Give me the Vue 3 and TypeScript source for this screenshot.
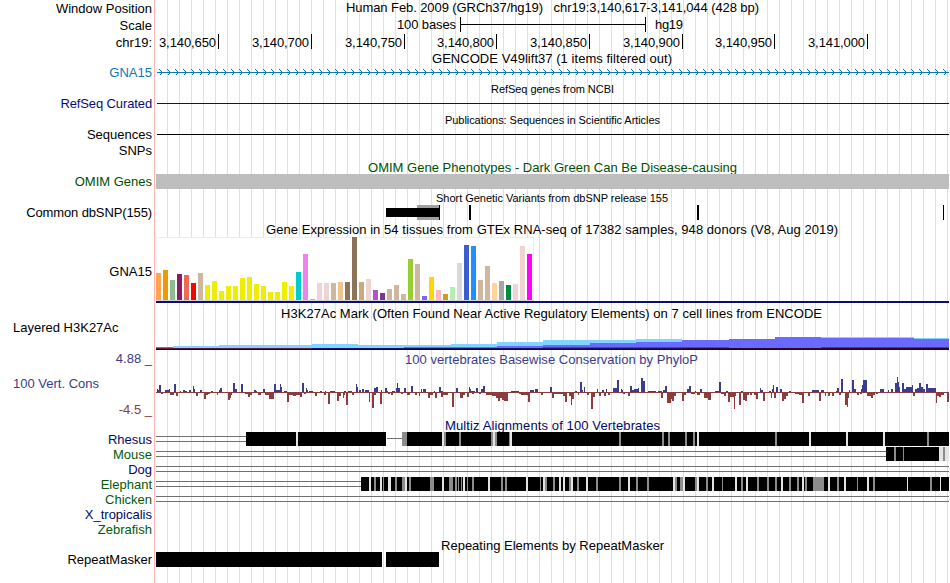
<script setup lang="ts">
type Bar = [number, number, number]
type Seg = [number, number]
interface Title { text: string; x: number; w: number; base: number; size?: number; color?: string }
interface Track {
  id: string
  y: number
  h: number
  label?: string
  color?: string
  side?: 'left'
  tight?: boolean
  title?: Title
  kind?: string
}

const tracks: Track[] = [
  { id: 'pos', y: 0, h: 17, label: 'Window Position', title: { text: 'Human Feb. 2009 (GRCh37/hg19)\u00a0\u00a0 chr19:3,140,617-3,141,044 (428 bp)', x: 346, w: 413, base: 12 } },
  { id: 'scale', y: 17, h: 17, label: 'Scale', kind: 'scale' },
  { id: 'ruler', y: 34, h: 16, label: 'chr19:', kind: 'ruler' },
  { id: 'gencode-t', y: 50, h: 15, title: { text: 'GENCODE V49lift37 (1 items filtered out)', x: 432, w: 240, base: 63 } },
  { id: 'gencode', y: 65, h: 15, label: 'GNA15', color: '#0c78b4', kind: 'gene' },
  { id: 'refseq-t', y: 80, h: 16, title: { text: 'RefSeq genes from NCBI', x: 491, w: 123, base: 93, size: 11 } },
  { id: 'refseq', y: 96, h: 15, label: 'RefSeq Curated', color: '#0c0c78', tight: true, kind: 'refseq' },
  { id: 'pubs-t', y: 111, h: 16, title: { text: 'Publications: Sequences in Scientific Articles', x: 445, w: 215, base: 124, size: 11 } },
  { id: 'pubs', y: 127, h: 15, label: 'Sequences', kind: 'pubs' },
  { id: 'snps', y: 142, h: 16, label: 'SNPs' },
  { id: 'omim-t', y: 158, h: 16, title: { text: 'OMIM Gene Phenotypes - Dark Green Can Be Disease-causing', x: 368, w: 369, base: 172, color: '#005000' } },
  { id: 'omim', y: 174, h: 15, label: 'OMIM Genes', color: '#005000', kind: 'omim' },
  { id: 'dbsnp-t', y: 189, h: 16, title: { text: 'Short Genetic Variants from dbSNP release 155', x: 436, w: 232, base: 202, size: 11 } },
  { id: 'dbsnp', y: 205, h: 15, label: 'Common dbSNP(155)', tight: true, kind: 'dbsnp' },
  { id: 'gtex-t', y: 220, h: 16, title: { text: 'Gene Expression in 54 tissues from GTEx RNA-seq of 17382 samples, 948 donors (V8, Aug 2019)', x: 266, w: 572, base: 234 } },
  { id: 'gtex', y: 236, h: 70, label: 'GNA15', kind: 'gtex' },
  { id: 'h3k-t', y: 306, h: 14, title: { text: 'H3K27Ac Mark (Often Found Near Active Regulatory Elements) on 7 cell lines from ENCODE', x: 281, w: 541, base: 318 } },
  { id: 'h3k', y: 320, h: 15, label: 'Layered H3K27Ac', side: 'left', kind: 'h3k' },
  { id: 'gap', y: 335, h: 16 },
  { id: 'cons-t', y: 351, h: 15, label: '4.88 _', color: '#3c3c8c', title: { text: '100 vertebrates Basewise Conservation by PhyloP', x: 405, w: 293, base: 364, color: '#3c3c8c' } },
  { id: 'cons', y: 366, h: 35, label: '100 Vert. Cons', color: '#3c3c8c', side: 'left', kind: 'cons' },
  { id: 'cons-b', y: 401, h: 16, label: '-4.5 _', color: '#8c3c3c' },
  { id: 'multiz-t', y: 417, h: 15, title: { text: 'Multiz Alignments of 100 Vertebrates', x: 445, w: 215, base: 430, color: '#000a64' } },
  { id: 'rhesus', y: 432, h: 15, label: 'Rhesus', color: '#000a64', kind: 'align' },
  { id: 'mouse', y: 447, h: 15, label: 'Mouse', color: '#005a0a', kind: 'align' },
  { id: 'dog', y: 462, h: 15, label: 'Dog', color: '#000a64', kind: 'align' },
  { id: 'elephant', y: 477, h: 15, label: 'Elephant', color: '#005a0a', kind: 'align' },
  { id: 'chicken', y: 492, h: 15, label: 'Chicken', color: '#005a0a', kind: 'align' },
  { id: 'xtrop', y: 507, h: 15, label: 'X_tropicalis', color: '#000a64' },
  { id: 'zebrafish', y: 522, h: 15, label: 'Zebrafish', color: '#005a0a' },
  { id: 'rmsk-t', y: 537, h: 15, title: { text: 'Repeating Elements by RepeatMasker', x: 441, w: 223, base: 550 } },
  { id: 'rmsk', y: 552, h: 15, label: 'RepeatMasker', kind: 'rmsk' },
]

const ruler = [
  { x: 218, text: '3,140,650' }, { x: 311, text: '3,140,700' }, { x: 404, text: '3,140,750' }, { x: 496, text: '3,140,800' },
  { x: 589, text: '3,140,850' }, { x: 682, text: '3,140,900' }, { x: 774, text: '3,140,950' }, { x: 867, text: '3,141,000' },
]

const chevrons = Array.from({ length: 99 }, (_, i) => `M${159.5 + i * 8} 69.5l3 3l-3 3`).join('')

const Y = '#eeee00'
const T = '#cdb79e'
const P = '#eed5d2'
const gtex: [number, string][] = [
  [27, '#ffa54f'], [30, '#ee9a00'], [20, '#8fbc8f'], [26, '#8b1c62'], [25, '#ee6a50'], [17, '#ff0000'], [27, T],
  [15, Y], [19, Y], [9, Y], [14, Y], [14, Y], [22, Y], [23, Y], [16, Y], [14, Y], [8, Y], [8, Y], [18, Y], [14, Y],
  [28, '#00cdcd'], [46, '#ee82ee'], [1, '#9ac0cd'], [17, P], [17, P], [17, T], [18, '#eec591'], [18, '#8b7355'],
  [63, '#8b7355'], [18, '#cdaa7d'], [21, P], [10, '#b452cd'], [7, '#7a378b'], [11, T], [15, T], [6, T],
  [41, '#9acd32'], [36, T], [4, '#7a67ee'], [23, '#ffd700'], [10, '#ffb6c1'], [6, '#cd9b1d'], [13, '#b4eeb4'],
  [37, '#d9d9d9'], [55, '#3a5fcd'], [54, '#1e90ff'], [20, T], [34, T], [17, '#ffd39b'], [19, '#a6a6a6'],
  [15, '#008b45'], [16, P], [54, P], [46, '#ff00ff'],
]

/* Stepped signal layers: [start x, top y], each step runs to the next start */
interface Layer { fill: string; end: number; base: number; steps: Seg[] }
const layers: Layer[] = [
  { fill: '#80d4ff', end: 949, base: 348, steps: [[173, 346], [219, 345], [312, 344], [358, 345], [451, 344], [497, 342], [543, 340], [636, 339], [682, 340], [729, 339], [775, 337], [914, 338]] },
  { fill: '#6a6aff', end: 949, base: 348, steps: [[156, 347], [173, 348], [404, 347], [497, 346], [543, 345], [590, 343], [636, 342], [682, 340], [729, 339], [775, 337], [821, 338], [914, 339]] },
  { fill: '#3a3af4', end: 729, base: 348, steps: [[404, 348], [543, 347]] },
  { fill: '#5a1a46', end: 312, base: 349, steps: [[156, 348]] },
  { fill: '#1c1070', end: 821, base: 349, steps: [[312, 348]] },
  { fill: '#7a2858', end: 949, base: 349, steps: [[821, 347]] },
  { fill: '#140420', end: 949, base: 350, steps: [[156, 349]] },
  { fill: '#2c0430', end: 949, base: 349, steps: [[682, 348]] },
]
function stepPath(l: Layer): string {
  let d = `M${l.steps[0][0]} ${l.base}`
  for (const [x, y] of l.steps) d += `H${x}V${y}`
  return `${d}H${l.end}V${l.base}Z`
}

const cons: Bar[] = [
  [157,1,3],[158,1,2],[159,2,7],[165,4,2],[169,1,3],[174,2,8],[180,1,1],[183,2,2],[185,2,1],[189,2,2],[193,1,6],[194,1,3],[200,2,2],[211,2,1],[219,1,2],[220,2,4],[233,2,9],[235,2,3],[241,2,8],[254,2,2],[256,1,1],[263,2,3],[274,2,8],[276,4,2],[280,1,8],[281,1,5],[284,3,1],[302,2,9],[306,1,4],[307,1,2],[309,4,1],[320,2,1],[325,1,1],[330,5,1],[344,2,1],[348,4,1],[356,1,8],[357,1,5],[359,2,2],[362,2,3],[365,4,2],[374,2,4],[376,2,5],[381,1,2],[385,2,4],[387,1,1],[392,3,1],[396,1,4],[397,1,9],[398,2,4],[404,2,4],
  [161,2,-2],[170,4,-3],[176,2,-4],[196,2,-4],[204,2,-7],[206,2,-3],[208,2,-2],[217,1,-3],[228,2,-8],[230,1,-6],[231,1,-3],[245,3,-2],[248,2,-5],[250,2,-3],[258,3,-3],[265,4,-3],[269,5,-7],[287,2,-10],[289,4,-3],[293,3,-4],[296,4,-3],[300,2,-5],[304,2,-2],[315,2,-4],[324,2,-3],[328,2,-12],[337,2,-9],[339,2,-4],[343,1,-6],[344,1,-3],[346,2,-13],[352,2,-3],[369,1,-10],[372,2,-16],[374,2,-3],[380,2,-12],[388,2,-2],[391,2,-3],[401,2,-2],[407,3,-3],
  [411,2,6],[421,1,3],[423,3,3],[434,1,1],[439,2,5],[441,2,1],[456,2,4],[469,1,5],[470,1,3],[471,4,1],[476,2,4],[481,2,3],[483,2,6],[511,8,1],[530,4,2],[535,3,3],[550,2,5],[575,2,1],[580,2,10],[582,1,2],[584,1,5],[597,1,3],[602,2,2],[606,1,3],[613,4,4],[617,2,12],[621,1,3],[622,1,2],[630,2,6],[632,2,2],[634,4,3],[638,1,4],[641,2,14],[643,2,11],[648,8,1],[658,4,1],[663,2,2],[665,2,6],
  [415,2,-3],[419,1,-4],[428,2,-6],[430,3,-3],[435,2,-6],[441,2,-5],[443,5,-3],[452,2,-15],[460,3,-6],[463,2,-3],[467,2,-5],[472,2,-2],[479,2,-2],[486,6,-3],[492,4,-4],[496,2,-6],[498,2,-9],[500,2,-6],[502,2,-8],[504,4,-9],[519,2,-2],[521,7,-3],[528,2,-10],[541,2,-3],[552,2,-6],[554,11,-2],[563,2,-4],[565,2,-10],[569,2,-4],[571,1,-13],[572,2,-7],[578,1,-3],[587,2,-3],[591,2,-17],[593,2,-5],[599,2,-4],[604,2,-4],[608,2,-3],[623,2,-2],[628,2,-4],[661,2,-6],[667,4,-11],[671,1,-7],[672,2,-9],[674,2,-4],
  [687,2,3],[689,2,6],[695,1,1],[700,2,3],[715,4,1],[719,2,10],[726,2,1],[741,2,1],[760,1,4],[761,2,2],[769,2,1],[772,1,3],[773,1,7],[776,2,5],[780,2,3],[789,2,1],[812,7,2],[821,3,2],[836,1,1],[837,2,4],[841,2,13],[849,1,2],[852,2,12],[854,2,3],[861,1,3],[862,1,7],[863,4,12],[880,4,3],[888,1,2],[891,2,3],[895,2,9],[897,1,15],[898,1,10],[899,1,5],[902,2,9],[904,2,3],[906,6,5],[912,1,7],[915,2,3],[917,2,4],[919,2,9],[921,2,5],[923,2,3],[926,2,8],[928,8,4],
  [682,2,-9],[684,2,-3],[691,4,-2],[697,3,-3],[704,4,-6],[708,3,-8],[721,3,-2],[724,2,-4],[728,2,-10],[730,4,-5],[734,1,-17],[735,1,-4],[739,2,-13],[743,2,-8],[745,2,-9],[747,2,-3],[750,2,-3],[754,2,-3],[756,2,-7],[763,2,-9],[771,1,-6],[774,2,-6],[782,2,-9],[784,2,-7],[786,2,-4],[795,4,-2],[799,3,-3],[802,2,-11],[808,2,-4],[819,2,-9],[825,1,-4],[828,2,-4],[832,2,-4],[839,2,-3],[845,2,-13],[847,1,-15],[848,1,-6],[857,2,-3],[860,2,-2],[867,4,-4],[871,2,-6],[873,2,-3],[876,2,-2],[913,2,-4],[936,1,-11],[937,2,-4],[939,2,-5],[941,3,-3],[947,2,-10],
]

/* Aligned blocks with lighter columns where identity drops */
const blocks: Record<string, { lines?: Seg; thin?: Seg[]; black: Seg[]; grey: Seg[]; light: Seg[] }> = {
  rhesus: {
    lines: [156, 246], thin: [[387, 402]], black: [[246, 296], [298, 386], [407, 949]],
    grey: [[402, 407], [444, 446], [459, 461], [491, 493], [495, 497], [509, 510], [619, 621], [662, 664], [668, 670], [685, 687], [693, 695], [775, 777], [927, 929]],
    light: [[296, 298], [442, 444], [493, 495], [510, 512], [697, 699], [809, 811], [846, 848], [883, 885]],
  },
  mouse: { lines: [156, 886], black: [[886, 939]], grey: [[894, 896], [903, 904], [943, 945]], light: [[939, 943], [945, 949]] },
  dog: { lines: [156, 949], black: [], grey: [], light: [] },
  elephant: {
    lines: [156, 361], black: [[361, 949]],
    grey: [[374, 376], [383, 384], [395, 397], [402, 405], [409, 411], [430, 434], [449, 453], [455, 457], [458, 459], [461, 462], [467, 468], [472, 474], [501, 503], [505, 507], [540, 541], [545, 547], [553, 555], [569, 571], [577, 579], [596, 598], [619, 621], [636, 638], [647, 649], [675, 677], [680, 683], [695, 697], [706, 708], [722, 723], [741, 743], [757, 759], [767, 769], [775, 777], [789, 791], [797, 799], [805, 807], [813, 824], [837, 839], [857, 858], [873, 875], [930, 932]],
    light: [[369, 371], [380, 382], [388, 391], [405, 407], [442, 444], [463, 465], [488, 490], [526, 528], [543, 545], [559, 561], [563, 565], [571, 573], [586, 588], [628, 630], [673, 675], [683, 685], [697, 699], [712, 714], [735, 737], [746, 748], [781, 783], [802, 804], [828, 830], [844, 846], [867, 869], [907, 908], [940, 941]],
  },
  chicken: { lines: [156, 949], black: [], grey: [], light: [] },
}
</script>

<template>
  <main class="browser">
    <section v-for="t in tracks" :key="t.id" class="track" :style="{ height: t.h + 'px' }">
      <div class="label" :class="{ left: t.side === 'left', tight: t.tight }" :style="{ color: t.color }">{{ t.label }}</div>
      <svg class="plot" width="798" :height="t.h" :viewBox="`152 ${t.y} 798 ${t.h}`" shape-rendering="crispEdges">
        <text v-if="t.title" :x="t.title.x" :y="t.title.base" :textLength="t.title.w" :font-size="t.title.size ?? 13" :fill="t.title.color ?? '#000'">{{ t.title.text }}</text>

        <template v-if="t.kind === 'scale'">
          <text x="397" y="29" textLength="59">100 bases</text>
          <path d="M460 17h1v7h184v-7h1v15h-1v-7h-184v7h-1z" />
          <text x="655" y="29" textLength="28">hg19</text>
        </template>

        <template v-else-if="t.kind === 'ruler'">
          <g v-for="r in ruler" :key="r.x">
            <text :x="r.x - 59" y="47" textLength="57">{{ r.text }}</text>
            <rect :x="r.x" y="34" width="1" height="15" />
          </g>
        </template>

        <template v-else-if="t.kind === 'gene'">
          <rect x="157" y="72" width="792" height="1" fill="#0c78b4" />
          <path :d="chevrons" class="chevrons" />
        </template>

        <rect v-else-if="t.kind === 'refseq'" x="157" y="103" width="792" height="1" fill="#0c0c78" />
        <rect v-else-if="t.kind === 'pubs'" x="157" y="134" width="792" height="1" />
        <rect v-else-if="t.kind === 'omim'" x="156" y="174" width="793" height="15" fill="#bebebe" />

        <template v-else-if="t.kind === 'dbsnp'">
          <rect x="417" y="205" width="22" height="15" fill="#a0a0a0" />
          <rect x="386" y="208" width="53" height="9" />
          <rect x="439" y="205" width="1" height="15" />
          <rect x="469" y="205" width="2" height="15" />
          <rect x="697" y="205" width="2" height="15" />
          <rect x="943" y="205" width="1" height="15" />
        </template>

        <template v-else-if="t.kind === 'gtex'">
          <rect x="156" y="237" width="378" height="64" fill="#eeeeee" />
          <rect x="157" y="238" width="376" height="62" fill="#fff" />
          <rect x="156" y="300" width="378" height="1" fill="#d4d4d4" />
          <rect v-for="(b, i) in gtex" :key="i" :x="156 + i * 7" :y="300 - b[0]" width="5" :height="b[0]" :fill="b[1]" />
          <rect x="156" y="301" width="793" height="2" fill="#0c0c78" />
        </template>

        <template v-else-if="t.kind === 'h3k'">
          <path v-for="(l, i) in layers" :key="i" :d="stepPath(l)" :fill="l.fill" />
        </template>

        <template v-else-if="t.kind === 'cons'">
          <rect x="156" y="392" width="793" height="1" fill="#8c3c3c" />
          <rect v-for="(b, i) in cons" :key="i" :x="b[0]" :y="b[2] > 0 ? 392 - b[2] : 392" :width="b[1]" :height="Math.abs(b[2])" :fill="b[2] > 0 ? '#3c3c8c' : '#8c3c3c'" />
        </template>

        <g v-else-if="t.kind === 'align'">
          <template v-if="blocks[t.id].lines">
            <rect v-for="dy in [4, 9]" :key="dy" :x="blocks[t.id].lines![0]" :y="t.y + dy" :width="blocks[t.id].lines![1] - blocks[t.id].lines![0]" height="1" fill="#707070" />
          </template>
          <rect v-for="s in blocks[t.id].thin ?? []" :key="'t' + s[0]" :x="s[0]" :y="t.y + 6" :width="s[1] - s[0]" height="1" fill="#707070" />
          <rect v-for="s in blocks[t.id].black" :key="'b' + s[0]" :x="s[0]" :y="t.y" :width="s[1] - s[0]" height="14" />
          <rect v-for="s in blocks[t.id].grey" :key="'g' + s[0]" :x="s[0]" :y="t.y" :width="s[1] - s[0]" height="14" fill="#8c8c8c" />
          <rect v-for="s in blocks[t.id].light" :key="'l' + s[0]" :x="s[0]" :y="t.y" :width="s[1] - s[0]" height="14" fill="#e4e4e4" />
        </g>

        <template v-else-if="t.kind === 'rmsk'">
          <rect x="156" y="552" width="226" height="15" />
          <rect x="386" y="552" width="53" height="15" />
        </template>
      </svg>
    </section>
  </main>
</template>

<style>
body {
  margin: 0;
  background: #fff;
}
</style>

<style scoped>
.browser {
  width: 950px;
  height: 583px;
  overflow: hidden;
  font: 13px "Liberation Sans", Arial, sans-serif;
  color: #000;
  background:
    linear-gradient(#ffb4b4, #ffb4b4) 154px 0 / 1px 100% no-repeat,
    repeating-linear-gradient(to right, #dcdcff 0 1px, transparent 1px 12px) 167px 0 / 782px 100% no-repeat,
    #fff;
}
.track {
  display: flex;
}
.label {
  display: flex;
  flex: 0 0 152px;
  align-items: center;
  justify-content: flex-end;
  white-space: pre;
}
.label.left {
  justify-content: flex-start;
  box-sizing: border-box;
  padding-left: 13px;
}
.label.tight {
  letter-spacing: -0.12px;
}
.plot {
  display: block;
  flex: none;
  overflow: visible;
}
.chevrons {
  fill: none;
  stroke: #0c78b4;
  stroke-width: 1;
}
</style>
